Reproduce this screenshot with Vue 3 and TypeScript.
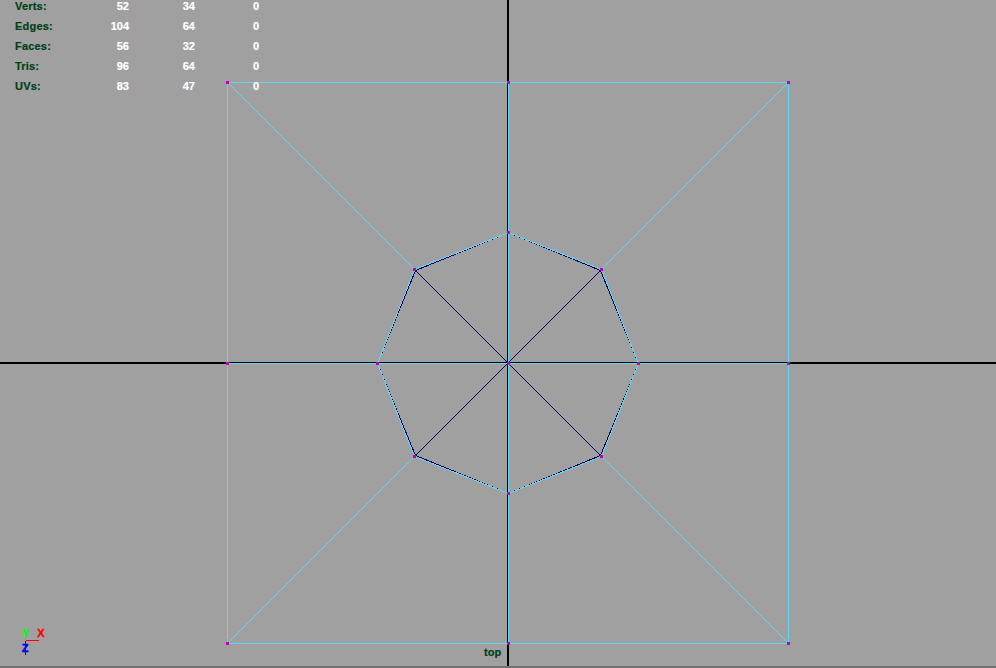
<script setup lang="ts">
const rows = [
  { label: 'Verts:', a: 52, b: 34, c: 0 },
  { label: 'Edges:', a: 104, b: 64, c: 0 },
  { label: 'Faces:', a: 56, b: 32, c: 0 },
  { label: 'Tris:', a: 96, b: 64, c: 0 },
  { label: 'UVs:', a: 83, b: 47, c: 0 },
]
const cx = 508
const cy = 363
const oct = [
  [508, 232], [601, 269], [638, 363], [601, 456],
  [508, 493], [414, 456], [377, 363], [414, 269],
]
const corners = [[227, 82], [788, 82], [788, 643], [227, 643]]
const px = (p: number[]) => `${p[0] + 0.5},${p[1] + 0.5}`
const octPts = oct.map(px).join(' ')
// the dark inner outline meets the cyan one at the axis points and splits off towards the diagonal ones
const innerPts = oct
  .map(([x, y]) => {
    const diagonal = x !== cx && y !== cy
    return px(diagonal ? [x + Math.sign(cx - x), y + Math.sign(cy - y)] : [x, y])
  })
  .join(' ')
const verts = [...corners, ...oct, [508, 82], [508, 643], [227, 363], [788, 363], [508, 363]]
</script>

<template>
  <div class="viewport">
    <svg class="scene" width="996" height="668" viewBox="0 0 996 668" shape-rendering="crispEdges">
      <rect x="0" y="362" width="227" height="2" fill="#000" />
      <rect x="789" y="362" width="207" height="2" fill="#000" />
      <rect x="507" y="0" width="2" height="82" fill="#000" />
      <rect x="507" y="644" width="2" height="22" fill="#000" />
      <rect x="227" y="362" width="562" height="1" fill="#000" />
      <rect x="507" y="82" width="1" height="562" fill="#000" />

      <g fill="none">
        <g stroke="#00005c" stroke-width="1">
          <line x1="415.5" y1="270.5" x2="601.5" y2="456.5" />
          <line x1="600.5" y1="270.5" x2="414.5" y2="456.5" />
        </g>
        <polygon :points="innerPts" stroke="#00005c" stroke-width="1" />
        <polygon :points="octPts" stroke="#5fd7f2" stroke-width="1" />
        <g stroke="#5fd7f2" stroke-width="1">
          <line x1="227.5" y1="82.5" x2="414.5" y2="269.5" />
          <line x1="788.5" y1="82.5" x2="601.5" y2="269.5" />
          <line x1="227.5" y1="643.5" x2="414.5" y2="456.5" />
          <line x1="788.5" y1="643.5" x2="601.5" y2="456.5" />
        </g>
      </g>

      <rect x="227" y="82" width="562" height="1" fill="#5fd7f2" />
      <rect x="227" y="643" width="562" height="1" fill="#5fd7f2" />
      <rect x="227" y="82" width="1" height="562" fill="#5fd7f2" />
      <rect x="788" y="82" width="1" height="562" fill="#5fd7f2" />
      <rect x="227" y="363" width="562" height="1" fill="#5fd7f2" />
      <rect x="508" y="82" width="1" height="562" fill="#5fd7f2" />

      <rect
        v-for="(v, i) in verts"
        :key="i"
        :x="v[0] - 1"
        :y="v[1] - 1"
        width="3"
        height="3"
        fill="#c000c0"
      />

      <rect x="26" y="640" width="13" height="1" fill="#ff0000" />
      <rect x="25" y="635" width="1" height="5" fill="#00ff00" />
      <rect x="25" y="641" width="1" height="14" fill="#0000ff" />
      <text x="25.5" y="637" class="axis y">Y</text>
      <text x="41" y="637" class="axis x">X</text>
      <text x="25" y="652" class="axis z">Z</text>
    </svg>

    <div class="hud">
      <template v-for="r in rows" :key="r.label">
        <span class="label">{{ r.label }}</span>
        <span class="num">{{ r.a }}</span>
        <span class="num">{{ r.b }}</span>
        <span class="num">{{ r.c }}</span>
      </template>
    </div>

    <div class="cam">top</div>
    <div class="edge"></div>
  </div>
</template>

<style scoped>
.viewport {
  position: relative;
  width: 996px;
  height: 668px;
  overflow: hidden;
  background: #a0a0a0;
  font-family: "Liberation Sans", Arial, sans-serif;
  font-size: 11px;
  font-weight: 700;
  -webkit-text-stroke: 0.2px currentColor;
}
.scene {
  position: absolute;
  inset: 0;
  display: block;
}
.axis {
  font-family: "Liberation Sans", Arial, sans-serif;
  font-size: 11px;
  font-weight: 700;
  text-anchor: middle;
  -webkit-text-stroke: 0;
  stroke-width: 0.4px;
}
.axis.x { fill: #ff0000; stroke: #ff0000; }
.axis.y { fill: #00ff00; stroke: #00ff00; }
.axis.z { fill: #0000ff; stroke: #0000ff; }
.hud {
  position: absolute;
  left: 15px;
  top: 0;
  display: grid;
  grid-template-columns: 75px 39px 66px 64px;
  grid-auto-rows: 12px;
  row-gap: 8px;
  line-height: 12px;
}
.label {
  color: #004018;
  letter-spacing: 0.2px;
}
.num {
  color: #fff;
  text-align: right;
}
.cam {
  position: absolute;
  left: 484px;
  top: 646px;
  line-height: 12px;
  color: #004018;
}
.edge {
  position: absolute;
  left: 0;
  right: 0;
  bottom: 0;
  height: 2px;
  background: #707070;
}
</style>

<style>
html, body {
  margin: 0;
  overflow: hidden;
  background: #a0a0a0;
}
</style>
